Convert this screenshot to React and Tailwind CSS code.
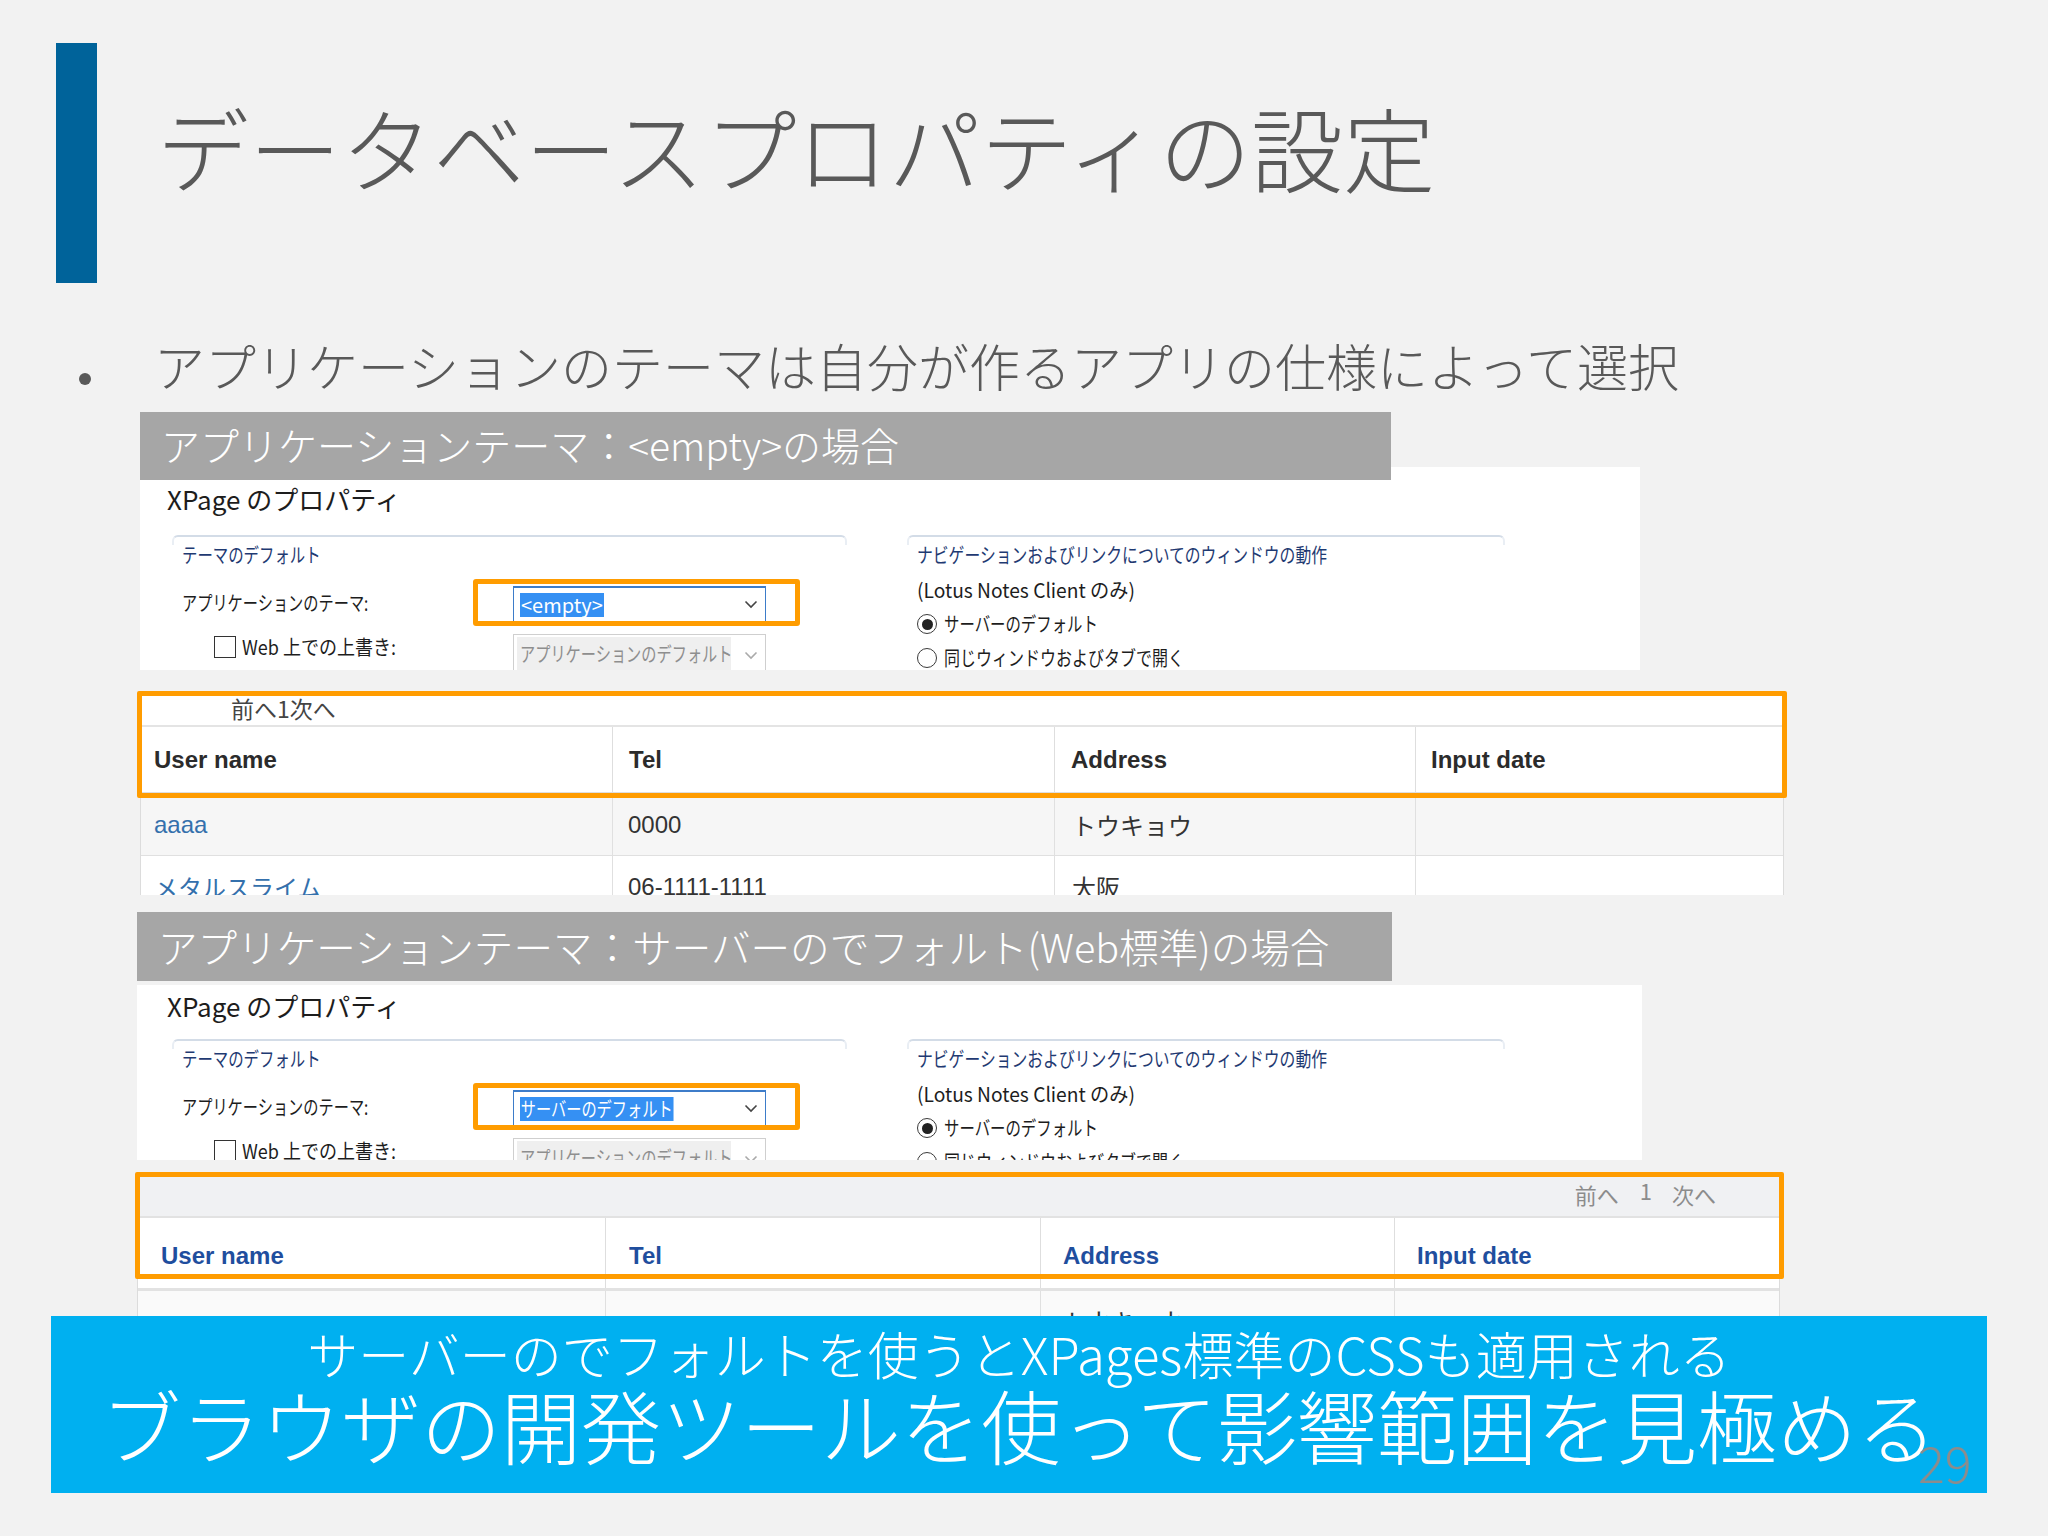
import React from "react";

const JP = "font-['Noto_Sans_CJK_JP',sans-serif]";

function T({ children, className = "" }) {
  return (
    <span className={`inline-block origin-left whitespace-nowrap ${className}`}>
      {children}
    </span>
  );
}

function Chevron({ color = "#444" }) {
  return (
    <svg width="14" height="9" viewBox="0 0 14 9" className="shrink-0">
      <polyline points="1.5,1.5 7,7 12.5,1.5" fill="none" stroke={color} strokeWidth="1.6" />
    </svg>
  );
}

function Radio({ checked }) {
  return (
    <span className="w-[20px] h-[20px] rounded-full border-[1.5px] border-[#3a3a3a] bg-white flex items-center justify-center shrink-0">
      {checked && <span className="w-[11px] h-[11px] rounded-full bg-[#222]" />}
    </span>
  );
}

function GroupLine() {
  return <div className="h-[10px] border-t-2 border-x-2 border-[#d3dce7] rounded-t-[6px] [border-left-color:#e9eef4] [border-right-color:#e9eef4]" />;
}

function Panel({ outer, groupTop, selected, katakana }) {
  return (
    <div className={`bg-white overflow-hidden text-[#1d1d1d] ${JP} ${outer}`}>
      <div className="h-[25px] text-[26px] leading-none">
        <T>XPage のプロパティ</T>
      </div>
      <div className={`flex ml-[5px] ${groupTop}`}>
        {/* left group */}
        <div className="w-[675px]">
          <GroupLine />
          <div className="-mt-[10px] pt-[8px] pl-[10px]">
            <div className="mt-[2px] h-[20px] text-[20px] leading-none text-[#1f3a72]">
              <T className="scale-x-[0.77]">テーマのデフォルト</T>
            </div>
            <div className="mt-[14px] flex items-center h-[47px]">
              <div className="w-[291px] text-[20px] leading-none">
                <T className="scale-x-[0.76]">アプリケーションのテーマ:</T>
              </div>
              <div className="w-[327px] h-[47px] border-[5px] border-[#ff9c00] rounded-[3px] flex items-end pl-[35px]">
                <div className="w-[253px] h-[35px] border-t-2 border-x-[1.5px] border-[#3d7cc9] bg-white flex items-center pl-[6px] pr-[7px]">
                  {katakana ? (
                    <T className="scale-x-[0.76] bg-[#3590f3] text-white text-[20px] leading-[24px] h-[24px] px-[1px]">{selected}</T>
                  ) : (
                    <span className="inline-block bg-[#3590f3] text-white text-[20px] leading-[24px] h-[24px] px-[1px]">{selected}</span>
                  )}
                  <div className="flex-1" />
                  <Chevron />
                </div>
              </div>
            </div>
            <div className="mt-[8px] flex items-start">
              <div className="w-[291px] pl-[32px] pt-[2px] flex items-center gap-[6px] h-[24px]">
                <span className="w-[22px] h-[22px] border-[1.5px] border-[#333] bg-white shrink-0" />
                <span className="text-[20px] leading-none">
                  <T className="scale-x-[0.9]">Web 上での上書き:</T>
                </span>
              </div>
              <div className="ml-[40px] w-[253px] h-[40px] border border-[#cfcfcf] flex items-start pt-[2px] pl-[3px] pr-[7px]">
                <span className="h-[34px] w-[214px] bg-[#efefef] flex items-center pl-[3px] text-[20px] leading-none text-[#8e8e8e]">
                  <T className="scale-x-[0.76]">アプリケーションのデフォルト</T>
                </span>
                <div className="flex-1" />
                <div className="pt-[14px]">
                  <Chevron color="#aaa" />
                </div>
              </div>
            </div>
          </div>
        </div>
        {/* right group */}
        <div className="ml-[60px] w-[598px]">
          <GroupLine />
          <div className="-mt-[10px] pt-[8px] pl-[10px]">
            <div className="mt-[2px] h-[20px] text-[20px] leading-none text-[#1f3a72]">
              <T className="scale-x-[0.79]">ナビゲーションおよびリンクについてのウィンドウの動作</T>
            </div>
            <div className="mt-[15px] h-[20px] text-[20px] leading-none">
              <T className="scale-x-[0.96]">(Lotus Notes Client のみ)</T>
            </div>
            <div className="mt-[13px] h-[22px] flex items-center gap-[7px]">
              <Radio checked />
              <span className="text-[20px] leading-none">
                <T className="scale-x-[0.77]">サーバーのデフォルト</T>
              </span>
            </div>
            <div className="mt-[12px] h-[22px] flex items-center gap-[7px]">
              <Radio />
              <span className="text-[20px] leading-none">
                <T className="scale-x-[0.8]">同じウィンドウおよびタブで開く</T>
              </span>
            </div>
          </div>
        </div>
      </div>
    </div>
  );
}

const TF = "font-['Liberation_Sans','Noto_Sans_CJK_JP',sans-serif]";

function Table1() {
  return (
    <div className="relative mt-[21px] ml-[140px] w-[1644px] h-[204px]">
      <div className={`h-full overflow-hidden bg-white border-x border-[#dcdcdc] ${TF}`}>
        <div className={`h-[36px] border-b-2 border-[#e4e4e4] flex items-center pl-[90px] text-[23px] leading-none text-[#444] ${JP}`}>
          前へ1次へ
        </div>
        <div className="grid grid-cols-[472px_442px_361px_1fr] h-[67px] border-b-2 border-[#dedede] text-[24px] font-bold text-[#2b2b2b] leading-none">
          <div className="border-r border-[#dedede] flex items-center pl-[13px]">User name</div>
          <div className="border-r border-[#dedede] flex items-center pl-[16px]">Tel</div>
          <div className="border-r border-[#dedede] flex items-center pl-[16px]">Address</div>
          <div className="flex items-center pl-[15px]">Input date</div>
        </div>
        <div className="grid grid-cols-[472px_442px_361px_1fr] h-[62px] bg-[#f6f6f6] border-b border-[#e0e0e0] text-[24px] leading-none text-[#333]">
          <div className="border-r border-[#e0e0e0] flex items-center pl-[13px] text-[#3470ac]">aaaa</div>
          <div className="border-r border-[#e0e0e0] flex items-center pl-[15px]">0000</div>
          <div className={`border-r border-[#e0e0e0] flex items-center pl-[17px] ${JP}`}>トウキョウ</div>
          <div />
        </div>
        <div className="grid grid-cols-[472px_442px_361px_1fr] h-[62px] bg-white text-[24px] leading-none text-[#333]">
          <div className={`border-r border-[#e0e0e0] flex items-center pl-[13px] text-[#3470ac] ${JP}`}>メタルスライム</div>
          <div className="border-r border-[#e0e0e0] flex items-center pl-[15px]">06-1111-1111</div>
          <div className={`border-r border-[#e0e0e0] flex items-center pl-[17px] ${JP}`}>大阪</div>
          <div />
        </div>
      </div>
      <div className="absolute -left-[3px] -right-[3px] top-0 h-[107px] border-[5px] border-[#ff9c00] rounded-[2px]" />
    </div>
  );
}

function Table2() {
  return (
    <div className="relative mt-[12px] ml-[137px] w-[1643px] h-[144px]">
      <div className={`h-full overflow-hidden bg-white border-x border-[#dcdcdc] ${TF}`}>
        <div className={`h-[44px] bg-[#f0f1f3] flex items-center justify-end pr-[63px] text-[22px] leading-none text-[#8c8c8c] ${JP}`}>
          <span>前へ</span>
          <span className="ml-[21px] -mt-[8px]">1</span>
          <span className="ml-[20px]">次へ</span>
        </div>
        <div className="grid grid-cols-[468px_435px_354px_1fr] h-[75px] border-t-2 border-b-[3px] border-[#e2e2e2] text-[24px] font-bold text-[#1f4e9e] leading-none">
          <div className="border-r border-[#dedede] flex items-end pb-[20px] pl-[23px]">User name</div>
          <div className="border-r border-[#dedede] flex items-end pb-[20px] pl-[23px]">Tel</div>
          <div className="border-r border-[#dedede] flex items-end pb-[20px] pl-[22px]">Address</div>
          <div className="flex items-end pb-[20px] pl-[22px]">Input date</div>
        </div>
        <div className="grid grid-cols-[468px_435px_354px_1fr] h-[60px] bg-[#fafafa] text-[24px] leading-none text-[#333]">
          <div className="border-r border-[#e0e0e0] pt-[24px] pl-[23px] text-[#3470ac]">aaaa</div>
          <div className="border-r border-[#e0e0e0] pt-[24px] pl-[23px]">0000</div>
          <div className={`border-r border-[#e0e0e0] pt-[18px] pl-[22px] ${JP}`}>トウキョウ</div>
          <div />
        </div>
      </div>
      <div className="absolute -left-[2px] -right-[4px] top-0 h-[107px] border-[5px] border-[#ff9c00] rounded-[2px]" />
    </div>
  );
}

export default function App() {
  return (
    <div className={`relative w-[2048px] h-[1536px] overflow-hidden bg-[#f2f2f2] flex flex-col ${JP}`}>
      {/* Title */}
      <div className="pt-[43px] pl-[56px] flex items-start">
        <div className="w-[41px] h-[240px] bg-[#00639a] shrink-0" />
        <h1 className="ml-[60px] mt-[57px] text-[92px] leading-none font-light text-[#595959] whitespace-nowrap">
          データベースプロパティの設定
        </h1>
      </div>

      {/* Bullet */}
      <div className="mt-[57px] pl-[79px] flex items-start h-[51px]">
        <span className="mt-[33px] w-[12px] h-[12px] rounded-full bg-[#595959] shrink-0" />
        <span className="ml-[63px] text-[51px] leading-none font-light text-[#595959] whitespace-nowrap">
          アプリケーションのテーマは自分が作るアプリの仕様によって選択
        </span>
      </div>

      {/* Label 1 */}
      <div className="relative z-10 mt-[21px] ml-[140px] w-[1251px] h-[68px] bg-[#a6a6a6] flex items-center pl-[21px]">
        <span className="-mt-[3px] text-[39px] leading-none font-light text-white whitespace-nowrap">
          アプリケーションテーマ：&lt;empty&gt;の場合
        </span>
      </div>

      <Panel outer="-mt-[13px] ml-[140px] w-[1500px] h-[203px] pt-[19px] pl-[27px]" groupTop="mt-[24px]" selected="<empty>" />

      <Table1 />

      {/* Label 2 */}
      <div className="relative z-10 mt-[17px] ml-[137px] w-[1255px] h-[69px] bg-[#a6a6a6] flex items-center pl-[21px]">
        <span className="-mt-[2px] text-[39.6px] leading-none font-light text-white whitespace-nowrap">
          アプリケーションテーマ：サーバーのでフォルト(Web標準)の場合
        </span>
      </div>

      <Panel outer="mt-[4px] ml-[137px] w-[1505px] h-[175px] pt-[8px] pl-[30px]" groupTop="mt-[21px]" selected="サーバーのデフォルト" katakana />

      <Table2 />

      {/* Banner */}
      <div className="ml-[51px] w-[1936px] h-[177px] bg-[#00b0f0] flex flex-col items-center pt-[12px] text-white">
        <div className="text-[51px] leading-none font-light whitespace-nowrap">
          サーバーのでフォルトを使うとXPages標準のCSSも適用される
        </div>
        <div className="mt-[4px] text-[80px] leading-none font-light whitespace-nowrap">
          ブラウザの開発ツールを使って影響範囲を見極める
        </div>
      </div>

      <div className="absolute left-[1918px] top-[1436px] text-[50px] leading-none font-light text-[#8c8c8c]">
        29
      </div>
    </div>
  );
}
